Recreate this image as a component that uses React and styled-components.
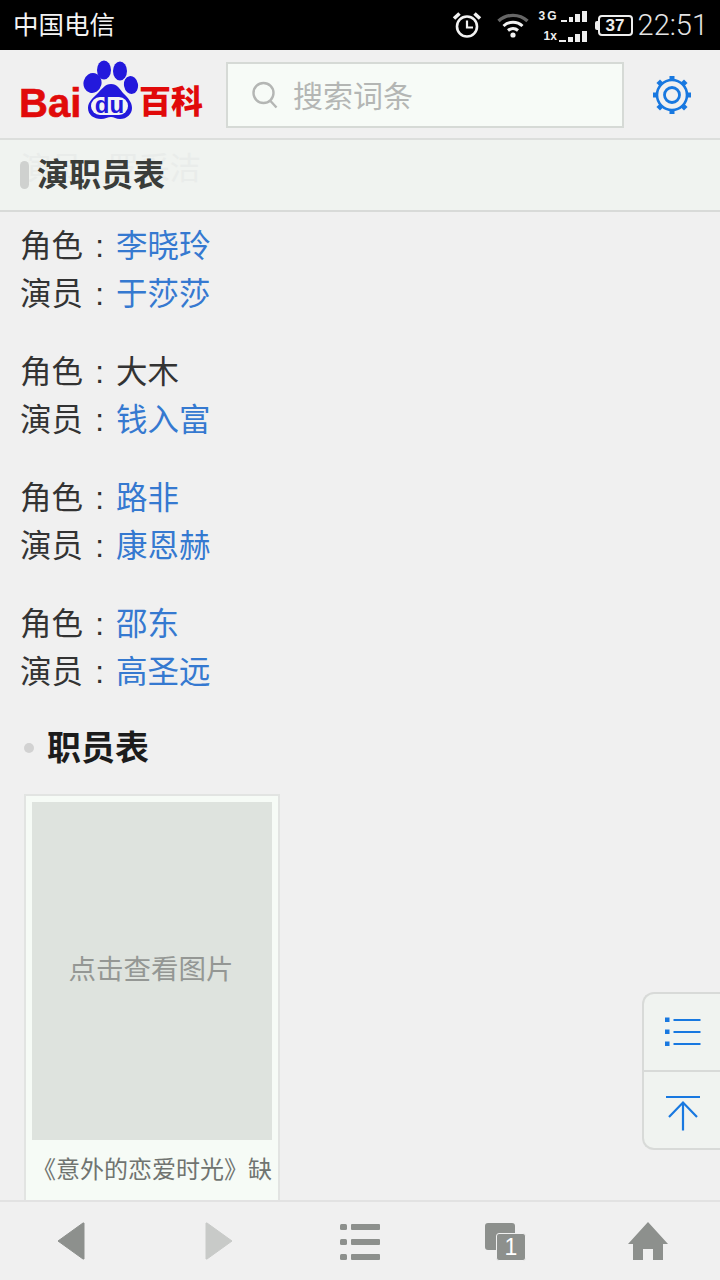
import React from "react";
import styled, { createGlobalStyle } from "styled-components";

const Global = createGlobalStyle`
  html, body { margin: 0; padding: 0; background: #f0f0f0; }
  * { box-sizing: border-box; }
`;
const CJK = `"Liberation Sans", "Noto Sans CJK SC", sans-serif`;

const Page = styled.div`
  position: relative; width: 720px; height: 1280px; overflow: hidden;
  display: flex; flex-direction: column; background: #f0f0f0; font-family: ${CJK};
`;
const StatusBar = styled.div`
  height: 50px; flex: none; background: #000; color: #fff; display: flex; align-items: center;
  padding: 0 12px 0 13px;
`;
const Carrier = styled.span`font-size: 25.5px; line-height: 50px; flex: 1; color: #f4f4f4;`;
const StatusIcons = styled.div`display: flex; align-items: center;`;
const Clock = styled.span`font-family: Roboto, sans-serif; font-size: 29px; color: #e4e4e4; font-weight: 300; margin-left: 5px;`;
const Battery = styled.div`
  position: relative; width: 35px; height: 21px; margin-left: 11px; border: 2px solid #eee; border-radius: 4px;
  font-size: 17px; font-weight: 700; line-height: 17px; text-align: center; color: #eee;
  &::before { content: ""; position: absolute; left: -5px; top: 4px; width: 3px; height: 9px; background: #eee; border-radius: 2px 0 0 2px; }
`;
const Signals = styled.div`display: flex; flex-direction: column; gap: 9px; margin: 3px 0 0 10px; width: 48px;`;
const SignalRow = styled.div`display: flex; align-items: flex-end; justify-content: flex-end; height: 11px; gap: 2px; color: #eee; font-size: 12px; font-weight: 700; line-height: 11px; letter-spacing: ${p => p.$spaced ? 2 : 0}px;`;
const SignalLabel = styled.span`margin-right: auto; margin-left: ${p => p.$indent}px;`;
const Bar = styled.i`display: block; width: ${p => p.$w}px; height: ${p => p.$h}px; background: #eee;`;

const Header = styled.header`
  height: 90px; flex: none; display: flex; align-items: flex-start; padding: 12px 0 0 19px;
  border-bottom: 2px solid #dcdedc; background: #f0f0f0;
`;
const Logo = styled.div`position: relative; width: 186px; height: 60px; margin-top: -2px; flex: none;`;
const LogoBai = styled.span`position: absolute; left: 0; top: 21px; font-size: 40px; line-height: 44px; font-weight: 700; color: #e10a0a; -webkit-text-stroke: 0.6px #e10a0a;`;
const LogoDuPill = styled.span`
  position: absolute; left: 72px; top: 37px; width: 37px; height: 18px; border-radius: 9px; background: #f4f4f4;
  text-align: center; font-size: 24px; line-height: 16px; font-weight: 700; color: #2319dc; letter-spacing: 0;
`;
const LogoBaike = styled.span`position: absolute; left: 120px; top: 23px; font-size: 32px; line-height: 38px; font-weight: 900; color: #e10a0a; white-space: nowrap;`;
const Search = styled.div`
  margin-left: 21px; width: 398px; height: 66px; border: 2px solid #d6dad6; background: #f7fbf7;
  display: flex; align-items: center; padding-left: 24px; gap: 15px; padding-bottom: 2px;
  font-size: 30px; color: #b4b6b4;
`;
const Gear = styled.div`margin-left: 28px; margin-top: 13px; width: 42px; height: 42px;`;

const Main = styled.main`flex: 1; min-height: 0; overflow: hidden; position: relative;`;
const Sticky = styled.div`
  position: relative; height: 72px; background: #f0f3f0; border-bottom: 2px solid #d8dad8; display: flex;
  align-items: center; padding-left: 20px; gap: 8px;
`;
const Ghost = styled.span`position: absolute; left: 20px; top: 9px; font-size: 31px; line-height: 40px; color: #e9ecea; white-space: pre;`;
const Pill = styled.i`position: relative; display: block; width: 9px; height: 28px; background: #cfd1cf; border-radius: 5px;`;
const StickyTitle = styled.h2`position: relative; margin: 0; font-size: 32px; line-height: 40px; font-weight: 700; color: #3a3d3a;`;

const Content = styled.div`padding: 10px 0 0 20px;`;
const CastGroup = styled.div`margin-bottom: 30px;`;
const CastRow = styled.div`display: flex; font-size: 31.5px; line-height: 48px; color: #333; white-space: pre;`;
const Colon = styled.span`width: 33px; text-align: center;`;
const Link = styled.span`color: #3579d0;`;
const SubHead = styled.h3`
  display: flex; align-items: center; margin: -5px 0 0 4px; height: 48px; gap: 13px;
  font-size: 34px; font-weight: 700; color: #1c1c1c;
`;
const Dot = styled.i`width: 10px; height: 10px; border-radius: 50%; background: #d2d2d2; display: block; margin-top: 6px;`;
const Card = styled.div`
  margin: 25px 0 0 4px; width: 256px; height: 420px; border: 2px solid #e2e4e2; background: #f6fbf6;
  padding: 6px 6px 0 6px;
`;
const Thumb = styled.div`
  width: 240px; height: 338px; background: #dee3de; display: flex; align-items: center; justify-content: center;
  font-size: 27.5px; color: #949794; padding: 0 2px 8px 0;
`;
const Caption = styled.div`
  width: 242px; overflow: hidden; white-space: nowrap; font-size: 24px; line-height: 60px; color: #707470;
`;

const Float = styled.div`
  position: absolute; right: 0; top: 992px; width: 78px; height: 158px; background: #f0f3f0;
  border: 2px solid #d8dad8; border-right: none; border-radius: 12px 0 0 12px; display: flex; flex-direction: column;
`;
const FloatBtn = styled.div`
  height: ${p => p.$h}px; flex: none; display: flex; align-items: center; justify-content: center; padding: ${p => p.$top || 0}px 0 0 2px;
  & + & { border-top: 2px solid #d8dad8; }
`;

const BottomNav = styled.nav`
  height: 80px; flex: none; background: #f0f0f0; border-top: 2px solid #e2e2e2; position: relative; z-index: 1;
  display: grid; grid-template-columns: 142px 154px 128px 163px 122px; align-items: center; justify-items: center;
`;
const PageBadge = styled.div`position: relative; width: 41px; height: 38px; margin-top: 2px;`;
const BackPage = styled.i`position: absolute; left: 0; top: 0; width: 30px; height: 27px; background: #8d908d; border-radius: 3px; display: block;`;
const FrontPage = styled.span`
  position: absolute; right: 0; bottom: 0; width: 30px; height: 28px; background: #8d908d; border: 1px solid #f0f0f0; border-radius: 3px;
  color: #fff; font-size: 23px; line-height: 27px; text-align: center;
`;

const cast = [
  ["李晓玲", true, "于莎莎"],
  ["大木", false, "钱入富"],
  ["路非", true, "康恩赫"],
  ["邵东", true, "高圣远"],
];

const bars = [[7, 2], [5, 5], [5, 8], [5, 11]];

export default function App() {
  return (
    <Page>
      <Global />
      <StatusBar>
        <Carrier>中国电信</Carrier>
        <StatusIcons>
          <svg width="30" height="28" viewBox="0 0 30 28" fill="none" stroke="#f2f2f2">
            <circle cx="15" cy="15.5" r="10" strokeWidth="2.6" />
            <path d="M15 9.5v7h6" strokeWidth="2.2" />
            <path d="M2 7.5 7.5 2.5M28 7.5 22.5 2.5" strokeWidth="3.6" />
          </svg>
          <svg style={{ marginLeft: 15 }} width="32" height="26" viewBox="0 0 32 26" fill="none">
            <path d="M1.5 9C9.5 1.5 22.5 1.5 30.5 9" stroke="#666" strokeWidth="3.4" />
            <path d="M6.5 14C12 9 20 9 25.5 14" stroke="#f2f2f2" strokeWidth="3" />
            <path d="M11 18.5c3-2.6 7-2.6 10 0" stroke="#f2f2f2" strokeWidth="3" />
            <circle cx="16" cy="23" r="2.6" fill="#f2f2f2" />
          </svg>
          <Signals>
            <SignalRow $spaced><SignalLabel $indent={0}>3G</SignalLabel>{bars.map(([w, h], i) => <Bar key={i} $w={w} $h={h} />)}</SignalRow>
            <SignalRow><SignalLabel $indent={5}>1x</SignalLabel>{bars.map(([w, h], i) => <Bar key={i} $w={w} $h={h} />)}</SignalRow>
          </Signals>
          <Battery>37</Battery>
          <Clock>22:51</Clock>
        </StatusIcons>
      </StatusBar>
      <Header>
        <Logo>
          <LogoBai>Bai</LogoBai>
          <svg style={{ position: "absolute", left: 64, top: 0 }} width="56" height="60" viewBox="0 0 56 60" fill="#2319dc">
            <ellipse cx="9.5" cy="23" rx="9" ry="10" transform="rotate(15 9.5 23)" />
            <ellipse cx="21" cy="10" rx="7" ry="9.5" />
            <ellipse cx="37" cy="11" rx="7" ry="9.5" />
            <ellipse cx="48" cy="25" rx="7" ry="9" transform="rotate(-10 48 25)" />
            <path d="M28 24c6 0 9 5 12 9 5 5 9 9 9 15 0 6-5 11-12 11-4 0-6-2-9-2s-6 2-10 2c-7 0-13-4-13-11 0-6 5-10 9-14 5-5 8-10 14-10z" />
          </svg>
          <LogoDuPill>du</LogoDuPill>
          <LogoBaike>百科</LogoBaike>
        </Logo>
        <Search>
          <svg width="26" height="28" viewBox="0 0 26 28" fill="none" stroke="#b4b6b4" strokeWidth="2.4" style={{ marginTop: 2 }}>
            <circle cx="11.5" cy="12" r="10" />
            <path d="M18.5 20l6 6.5" />
          </svg>
          搜索词条
        </Search>
        <Gear>
          <svg width="42" height="42" viewBox="0 0 42 42" fill="none" stroke="#1878e0">
            <circle cx="20" cy="20" r="15" strokeWidth="2.6" />
            <circle cx="20" cy="20" r="7.5" strokeWidth="2.8" />
            <g stroke="none" fill="#1878e0">
              <rect x="17.5" y="1" width="5" height="5" />
              <rect x="17.5" y="34" width="5" height="5" />
              <rect x="1" y="17.5" width="5" height="5" />
              <rect x="34" y="17.5" width="5" height="5" />
              <rect x="5.5" y="5.5" width="5" height="5" transform="rotate(45 8 8)" />
              <rect x="29.5" y="5.5" width="5" height="5" transform="rotate(45 32 8)" />
              <rect x="5.5" y="29.5" width="5" height="5" transform="rotate(45 8 32)" />
              <rect x="29.5" y="29.5" width="5" height="5" transform="rotate(45 32 32)" />
            </g>
          </svg>
        </Gear>
      </Header>
      <Main>
        <Sticky>
          <Ghost>演员 : 罗采洁</Ghost>
          <Pill />
          <StickyTitle>演职员表</StickyTitle>
        </Sticky>
        <Content>
          {cast.map(([role, linked, actor]) => (
            <CastGroup key={actor}>
              <CastRow>角色<Colon>:</Colon>{linked ? <Link>{role}</Link> : role}</CastRow>
              <CastRow>演员<Colon>:</Colon><Link>{actor}</Link></CastRow>
            </CastGroup>
          ))}
          <SubHead><Dot />职员表</SubHead>
          <Card>
            <Thumb>点击查看图片</Thumb>
            <Caption>《意外的恋爱时光》缺</Caption>
          </Card>
        </Content>
      </Main>
      <Float>
        <FloatBtn $h={76}>
          <svg width="36" height="30" viewBox="0 0 36 30" fill="#1878e0">
            <rect x="0" y="0.5" width="4.5" height="4.5" /><rect x="8.5" y="2" width="27" height="2" />
            <rect x="0" y="12.5" width="4.5" height="4.5" /><rect x="8.5" y="14" width="27" height="2" />
            <rect x="0" y="24.5" width="4.5" height="4.5" /><rect x="8.5" y="26" width="27" height="2" />
          </svg>
        </FloatBtn>
        <FloatBtn $h={78} $top={6}>
          <svg width="36" height="36" viewBox="0 0 36 36" fill="none" stroke="#1878e0" strokeWidth="2.2">
            <path d="M1 2h34" />
            <path d="M18 35.5V7.5M4 22 18 7.5 32 22" />
          </svg>
        </FloatBtn>
      </Float>
      <BottomNav>
        <svg width="30" height="38" viewBox="0 0 30 38" fill="#8d908d" stroke="#8d908d" strokeLinejoin="round"><path d="M28 1v36h-1L2 19 27 1z" /></svg>
        <svg width="30" height="38" viewBox="0 0 30 38" fill="#c8cac8" stroke="#c8cac8" strokeLinejoin="round"><path d="M2 1v36h1l25-18L3 1z" /></svg>
        <svg width="40" height="38" viewBox="0 0 40 38" fill="#8d908d">
          <rect x="0" y="2" width="7" height="6" rx="1.5" /><rect x="11" y="2" width="29" height="6" rx="1" />
          <rect x="0" y="17" width="7" height="6" rx="1.5" /><rect x="11" y="17" width="29" height="6" rx="1" />
          <rect x="0" y="32" width="7" height="6" rx="1.5" /><rect x="11" y="32" width="29" height="6" rx="1" />
        </svg>
        <PageBadge><BackPage /><FrontPage>1</FrontPage></PageBadge>
        <svg width="40" height="38" viewBox="0 0 40 38" fill="#8d908d">
          <path d="M20 0 40 22h-5v16H25V27H15v11H5V22H0z" />
        </svg>
      </BottomNav>
    </Page>
  );
}
